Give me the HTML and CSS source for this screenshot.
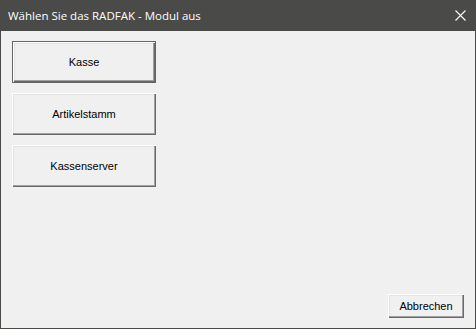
FILE: index.html
```html
<!DOCTYPE html>
<html>
<head>
    <title>RADFAK</title>
    <link rel="stylesheet" href="styles.css">
</head>
<body>
    <div class="window">
        <div class="titlebar">
            <span class="title">Wählen Sie das RADFAK - Modul aus</span>
            <svg class="close" width="11" height="11" viewBox="0 0 11 11">
                <path d="M0.5 0.5 L10.5 10.5 M10.5 0.5 L0.5 10.5" stroke="#ffffff" stroke-width="1.1" fill="none"/>
            </svg>
        </div>
        <div class="content">
            <div class="modules">
                <button class="btn btn-module btn-default">Kasse</button>
                <button class="btn btn-module">Artikelstamm</button>
                <button class="btn btn-module">Kassenserver</button>
            </div>
            <div class="footer">
                <button class="btn btn-cancel">Abbrechen</button>
            </div>
        </div>
    </div>
</body>
</html>
```

FILE: styles.css
```css
body {
    margin: 0;
    padding: 0;
    background-color: #f0f0f0;
    font-family: "Liberation Sans", Arial, sans-serif;
}

.window {
    width: 476px;
    height: 329px;
    box-sizing: border-box;
    border: 1px solid #4a4a48;
    border-top: none;
    display: flex;
    flex-direction: column;
    background-color: #f0f0f0;
}

.titlebar {
    height: 31px;
    background-color: #4a4a48;
    display: flex;
    align-items: center;
    justify-content: space-between;
    padding: 0 10px 0 8px;
    margin: 0 -1px;
    flex-shrink: 0;
}

.title {
    color: #ffffff;
    font-family: "Open Sans", "Noto Sans", sans-serif;
    font-size: 11.5px;
    margin-top: -1px;
}

.close {
    display: block;
    margin-top: -1px;
}

.content {
    flex: 1;
    display: flex;
    flex-direction: column;
    justify-content: space-between;
    padding: 10px 11px 10px 11px;
}

.modules {
    display: flex;
    flex-direction: column;
    gap: 10px;
}

.btn {
    font-family: "Liberation Sans", Arial, sans-serif;
    font-size: 11px;
    color: #000000;
    background-color: #f0f0f0;
    border: none;
    padding: 0;
    box-sizing: border-box;
    box-shadow: inset 1px 1px #ffffff, inset -1px -1px #696969, inset -2px -2px #a0a0a0, inset 2px 2px #e3e3e3;
}

.btn-module {
    width: 144px;
    height: 42px;
}

.btn-default {
    border: 1px solid #646464;
}

.footer {
    display: flex;
    justify-content: flex-end;
}

.btn-cancel {
    width: 76px;
    height: 24px;
}
```
